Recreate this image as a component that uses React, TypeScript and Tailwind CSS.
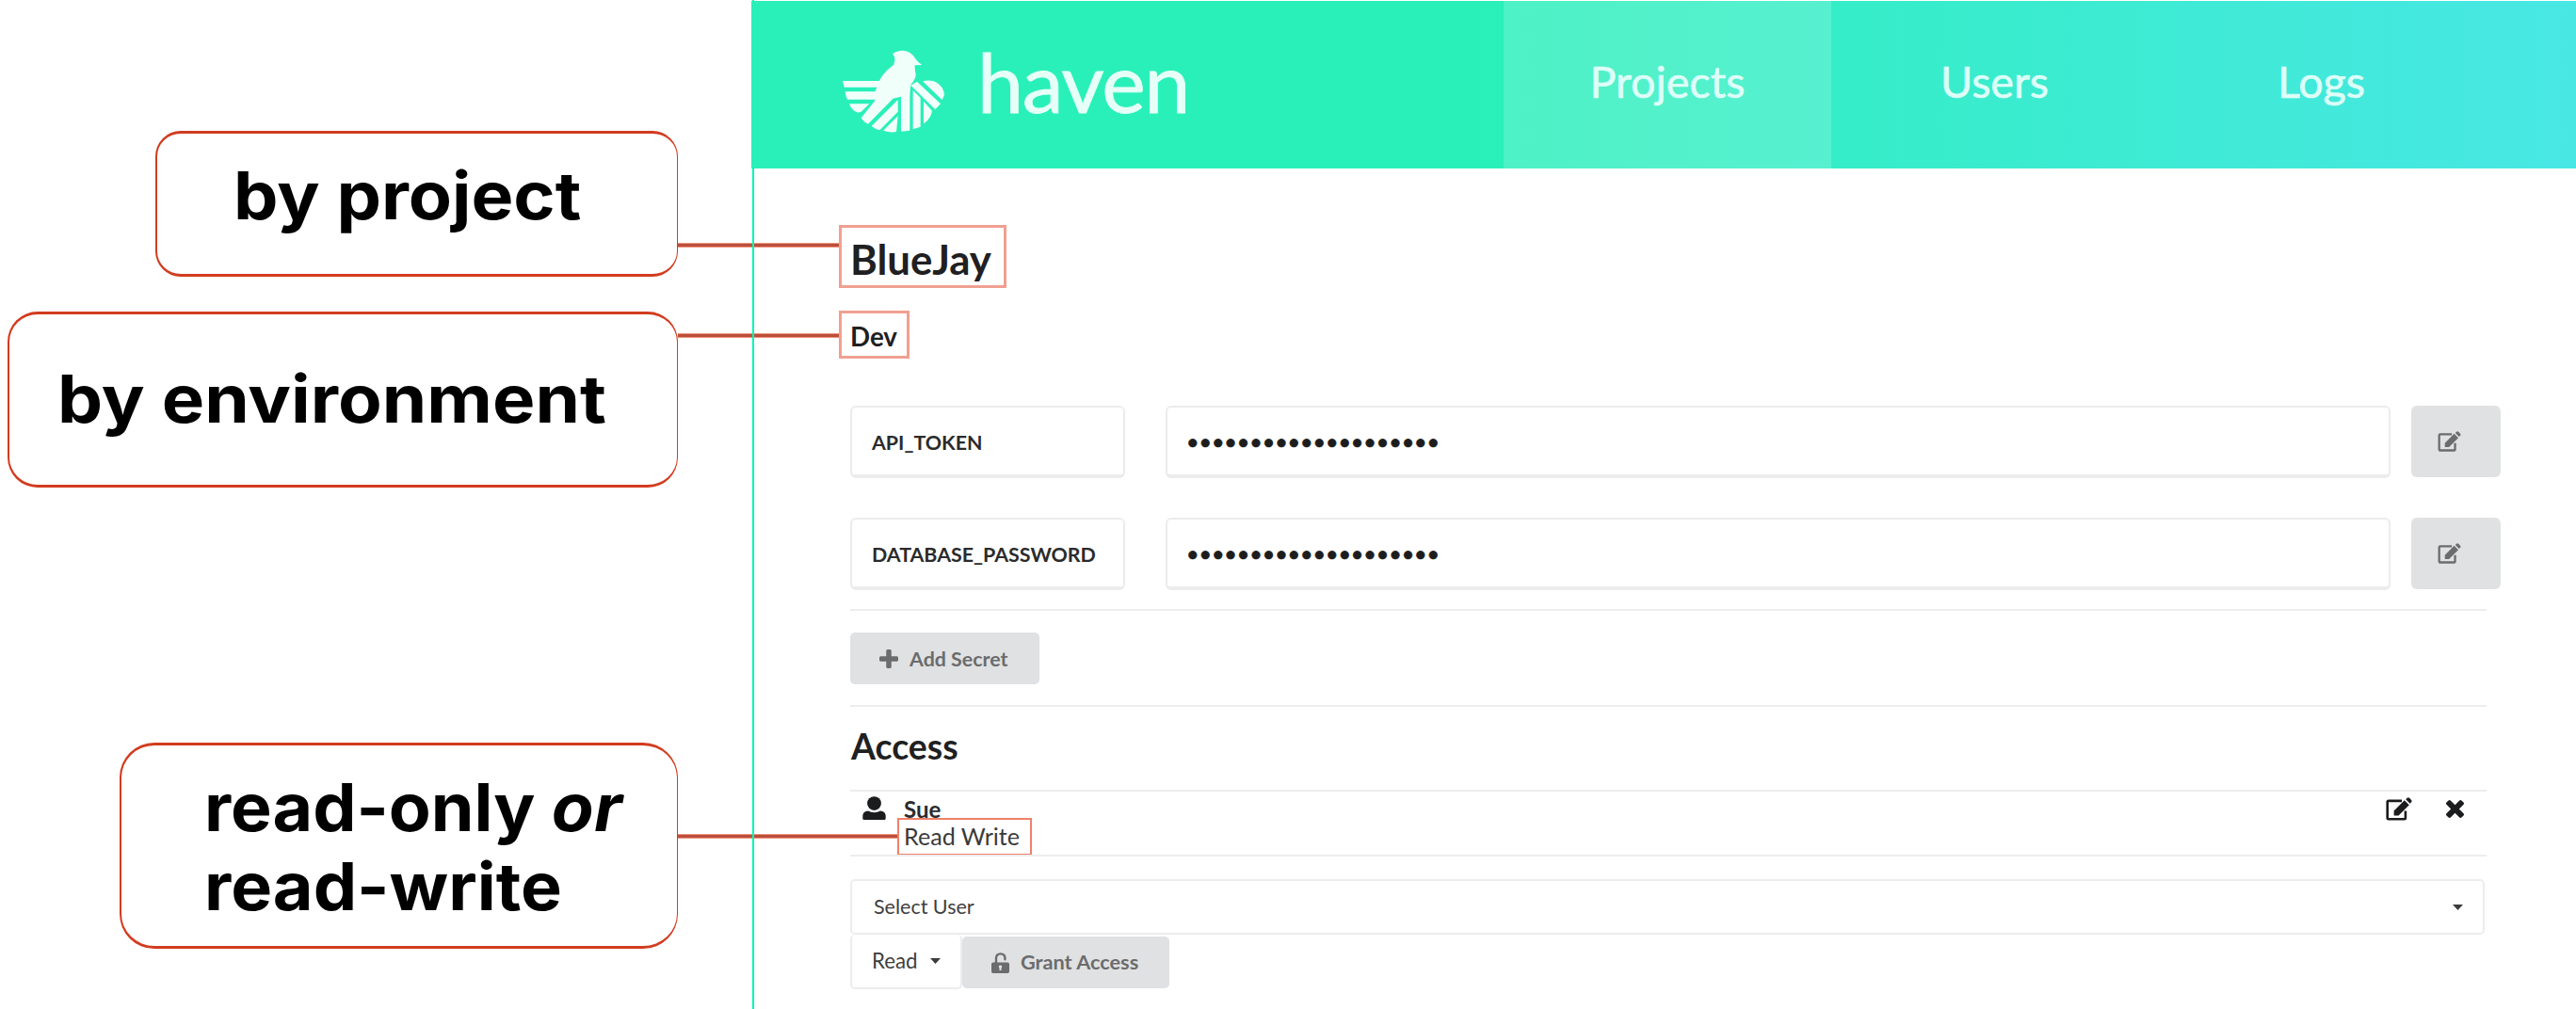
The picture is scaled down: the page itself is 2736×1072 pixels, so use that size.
import type { ReactNode } from "react";

function BirdLogo() {
  return (
    <svg viewBox="0 0 420 330" className="mt-[14px] h-[110px] w-[140px] shrink-0" fill="#f1fffb">
      <path d="M204 52Q218 40 238 41Q262 42 276 66Q284 78 298 87L275 88Q274 96 278 118Q278 132 262 150L258 190L231 188L205 194L150 202L140 190L158 150Q164 118 208 86Q214 74 210 60Z" />
      <path d="M45 138H165L158 158H50Z" />
      <path d="M53 172H150V197H60Q54 186 53 172Z" />
      <path d="M66 211H130L104 236Q90 242 80 232Q70 224 66 211Z" />
      <path d="M152 196L104 256Q112 270 126 275L207 193Z" />
      <path d="M221 198L137 282Q148 292 163 295L221 236Z" />
      <path d="M221 250L174 296Q196 304 216 300Z" />
      <path d="M231 180H259V296L231 299Z" />
      <path d="M269 168L293 192V284L269 292Z" />
      <path d="M303 203L330 233Q326 258 303 274Z" />
      <path d="M262 152L282 140L357 211L340 229Z" />
      <path d="M300 139Q330 132 350 147Q368 162 369 182L362 199Z" />
    </svg>
  );
}

function EditIcon({ className }: { className: string }) {
  return (
    <svg viewBox="0 0 28 25" className={className}>
      <path
        d="M17 3.9H2.9Q1.7 3.9 1.7 5.1V22.1Q1.7 23.3 2.9 23.3H19.7Q20.9 23.3 20.9 22.1V14.5"
        fill="none"
        stroke="currentColor"
        strokeWidth="2.6"
      />
      <path d="M8.6 14.4L19.8 3.2L24.8 8.2L13.6 19.4H8.6Z" fill="currentColor" />
      <path d="M21.2 2.3L23 .6Q24 0 25 .8L27.2 3Q28 4 27.3 5L25.7 6.8Z" fill="currentColor" />
    </svg>
  );
}

function PlusIcon() {
  return (
    <svg viewBox="192 128 1408 1408" className="size-[20px]" fill="currentColor">
      <path d="M1600 736v192q0 40-28 68t-68 28h-416v416q0 40-28 68t-68 28h-192q-40 0-68-28t-28-68v-416h-416q-40 0-68-28t-28-68v-192q0-40 28-68t68-28h416v-416q0-40 28-68t68-28h192q40 0 68 28t28 68v416h416q40 0 68 28t28 68z" />
    </svg>
  );
}

function CloseIcon() {
  return (
    <svg viewBox="302 366 1188 1188" className="size-[19px]" fill="currentColor">
      <path d="M1490 1322q0 40-28 68l-136 136q-28 28-68 28t-68-28l-294-294-294 294q-28 28-68 28t-68-28l-136-136q-28-28-28-68t28-68l294-294-294-294q-28-28-28-68t28-68l136-136q28-28 68-28t68 28l294 294 294-294q28-28 68-28t68 28l136 136q28 28 28 68t-28 68l-294 294 294 294q28 28 28 68z" />
    </svg>
  );
}

function UserIcon() {
  return (
    <svg viewBox="0 0 25 25" className="mt-[5px] h-[25px] w-[25px]" fill="currentColor">
      <circle cx="12.5" cy="7.6" r="7.4" />
      <path d="M0.3 23.5V20.5Q.6 15.8 6 15.4Q9 17.2 12.5 17.2T19 15.4Q24.4 15.8 24.7 20.5V23.5Q24.7 25 23 25H2Q.3 25 .3 23.5Z" />
    </svg>
  );
}

function UnlockIcon() {
  return (
    <svg viewBox="0 0 19 22" className="h-[22px] w-[19px]">
      <path d="M5 11V6.2Q5 1.4 9.7 1.4T14.4 6.2V7.2" fill="none" stroke="currentColor" strokeWidth="2.4" strokeLinecap="round" />
      <path
        fillRule="evenodd"
        fill="currentColor"
        d="M1.8 10.4H17.2Q19 10.4 19 12.2V20.2Q19 22 17.2 22H1.8Q0 22 0 20.2V12.2Q0 10.4 1.8 10.4ZM9.5 13.4A1.7 1.7 0 0 0 8.5 16.5V19H10.5V16.5A1.7 1.7 0 0 0 9.5 13.4Z"
      />
    </svg>
  );
}

function Caret() {
  return (
    <svg viewBox="0 0 11 6" className="h-[6px] w-[11px]" fill="#3c3c3c">
      <path d="M0 0H11L5.5 6Z" />
    </svg>
  );
}

function Callout({ className, children }: { className: string; children: ReactNode }) {
  return (
    <div className={`flex self-end border-y-[3px] border-l-2 border-r border-[#d23c20] font-['Inter',sans-serif] text-[70px] font-bold leading-[84px] text-black ${className}`}>
      {children}
    </div>
  );
}

function Connector({ className }: { className: string }) {
  return <div className={`absolute left-[720px] h-[5px] border-y border-[#f0937c] bg-[#bb4f3b] ${className}`} />;
}

function Divider({ className }: { className: string }) {
  return <div className={`ml-[102px] h-[2px] w-[1738px] bg-[#ededee] ${className}`} />;
}

function SecretRow({ name, className }: { name: string; className: string }) {
  return (
    <div className={`ml-[102px] flex h-[77px] ${className}`}>
      <div className="flex w-[292px] items-center rounded-[6px] border-2 border-b-[4px] border-[#ececed] pl-[21px] pt-[3px] text-[21.4px] font-bold text-[#2b2b2b]">
        {name}
      </div>
      <div className="ml-[43px] flex w-[1301px] items-center rounded-[6px] border-2 border-b-[4px] border-[#ececed] pl-[20px] pt-[1px] text-[23.2px] text-[#1d1d1d] [-webkit-text-stroke:0.6px]">
        ••••••••••••••••••••
      </div>
      <div className="ml-[22px] flex h-[76px] w-[95px] items-center rounded-[6px] bg-[#e0e1e2] pl-[28px] text-[#6b6c6d]">
        <EditIcon className="h-[22px] w-[25px]" />
      </div>
    </div>
  );
}

export default function App() {
  return (
    <div className="relative flex h-[1072px] w-[2736px] overflow-hidden bg-white font-['Lato',sans-serif]">
      <div className="flex w-[720px] shrink-0 flex-col">
        <Callout className="mt-[139px] h-[155px] w-[555px] items-center rounded-[27px] pb-[17px] pl-[81px]">
          <span className="origin-left scale-x-[1.077] whitespace-nowrap">by project</span>
        </Callout>
        <Callout className="mt-[37px] h-[187px] w-[712px] items-center rounded-[32px] pb-[1px] pl-[51px]">
          <span className="origin-left scale-x-[1.09] whitespace-nowrap">by environment</span>
        </Callout>
        <Callout className="mt-[271px] h-[219px] w-[593px] flex-col rounded-[37px] pl-[88px] pt-[24px]">
          <span className="origin-left scale-x-[1.049] whitespace-nowrap">
            read-only <em>or</em>
          </span>
          <span className="origin-left scale-x-[1.053] whitespace-nowrap">read-write</span>
        </Callout>
      </div>

      <Connector className="top-[258px] w-[173px]" />
      <Connector className="top-[354px] w-[172px]" />
      <Connector className="top-[886px] w-[235px]" />

      <div className="relative ml-[79px] flex w-[1937px] shrink-0 flex-col border-l-2 border-[#00f7b5]">
        <header className="-ml-[3px] mt-px flex h-[178px] shrink-0 items-center bg-linear-to-r from-[#29f0b9] from-40% to-[#48e7e4] text-white">
          <div className="-mt-[4px] ml-[82px] flex h-[110px] w-[717px] items-center">
            <BirdLogo />
            <span className="ml-[18px] pb-[5px] text-[88px] leading-none tracking-[-1.3px] text-[#e6fff7] [-webkit-text-stroke:0.8px]">haven</span>
          </div>
          <nav className="flex h-full text-[46.6px] leading-none text-[#dcfff8] [-webkit-text-stroke:0.7px]">
            <span className="flex w-[348px] items-center justify-center bg-white/17 pb-[8px]">Projects</span>
            <span className="flex w-[347px] items-center justify-center pb-[8px]">Users</span>
            <span className="flex w-[347px] items-center justify-center pb-[8px]">Logs</span>
          </nav>
        </header>

        <main className="flex flex-col items-start">
          <h1 className="ml-[90px] mt-[60px] flex h-[67px] w-[178px] items-center border-[3px] border-[#f0a091] pl-[9px] pt-[6px] text-[43.8px] font-bold leading-none text-[#1f2021]">
            BlueJay
          </h1>
          <h2 className="ml-[90px] mt-[24px] flex h-[51px] w-[75px] items-center border-[3px] border-[#f0a091] pl-[9px] pt-[5px] text-[27.7px] font-bold leading-none text-[#1f2021]">
            Dev
          </h2>

          <SecretRow name="API_TOKEN" className="mt-[50px]" />
          <SecretRow name="DATABASE_PASSWORD" className="mt-[42px]" />

          <Divider className="mt-[20px]" />
          <button className="ml-[102px] mt-[23px] flex h-[55px] w-[201px] items-center rounded-[5px] bg-[#e0e1e2] pl-[31px] text-[21.4px] font-bold text-[#6b6c6d]">
            <PlusIcon />
            <span className="ml-[12px] pt-px">Add Secret</span>
          </button>
          <Divider className="mt-[22px]" />

          <h3 className="ml-[103px] mt-[23px] h-[45px] text-[37.4px] font-bold leading-[38px] text-[#1f2021]">Access</h3>
          <Divider className="mt-[20px]" />

          <div className="ml-[102px] flex h-[67px] w-[1738px] items-start text-[#1b1c1d]">
            <span className="ml-[13px]">
              <UserIcon />
            </span>
            <div className="ml-[12px] mt-[7px] flex flex-col items-start">
              <span className="ml-[7px] h-[21px] text-[24px] font-bold leading-[24px] text-[#2b2b2b]">Sue</span>
              <span className="flex h-[40px] w-[143px] items-center border-2 border-[#f0806a] pl-[5px] text-[25.1px] leading-none text-[#3a3a3a]">
                <span className="whitespace-nowrap">Read Write</span>
              </span>
            </div>
            <div className="ml-auto mr-[24px] mt-[6px] flex items-center gap-[36px]">
              <EditIcon className="h-[25px] w-[28px]" />
              <CloseIcon />
            </div>
          </div>
          <Divider className="" />

          <div className="ml-[102px] mt-[24px] flex h-[59px] w-[1736px] items-center justify-between rounded-[5px] border-2 border-[#ededee] pl-[23px] pr-[21px] text-[21.5px] text-[#3f3f3f]">
            <span>Select User</span>
            <Caret />
          </div>
          <div className="ml-[102px] flex h-[58px] items-start">
            <div className="flex h-[58px] w-[119px] items-center gap-[13px] rounded-[5px] border-2 border-t-0 border-[#ededee] pl-[21px] text-[22.3px] text-[#3f3f3f]">
              Read
              <Caret />
            </div>
            <button className="mt-[2px] flex h-[55px] w-[220px] items-center rounded-[5px] bg-[#e0e1e2] pl-[31px] text-[21.7px] font-bold text-[#6b6c6d]">
              <UnlockIcon />
              <span className="ml-[12px]">Grant Access</span>
            </button>
          </div>
        </main>
      </div>
    </div>
  );
}
